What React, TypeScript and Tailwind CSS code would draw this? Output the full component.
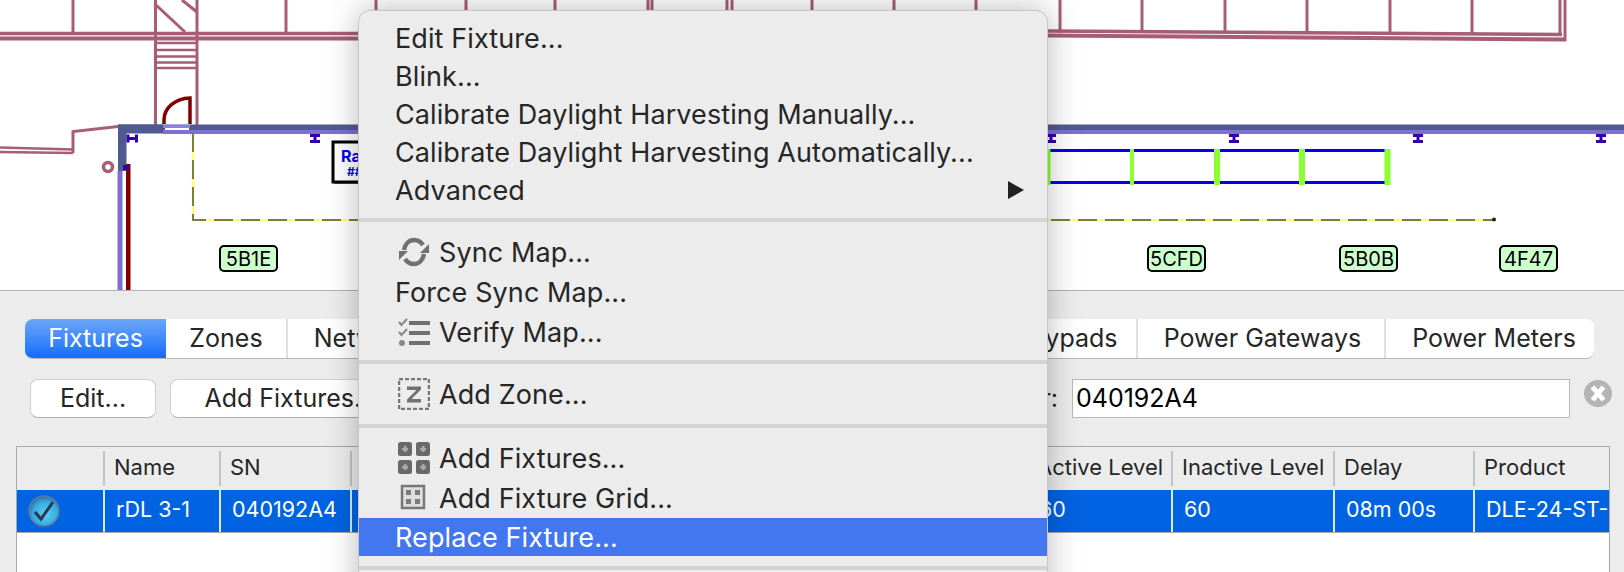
import React from "react";

const FONT = "font-['Inter','Liberation_Sans',sans-serif]";

function Plan() {
  const plum = "#a85c75";
  const tops = [73, 286, 376, 466, 555, 648, 652, 727, 732, 812, 894, 976, 1060, 1142, 1225, 1307, 1390, 1472];
  const markers = [315, 1051, 1234, 1418, 1601];
  const lamps: [number, number][] = [[1049, 3], [1132, 4], [1217, 6], [1302, 6], [1387.5, 6]];
  return (
    <svg width="1624" height="290" viewBox="0 0 1624 290" className="block">
      {tops.map((x) => (
        <line key={x} x1={x} y1={0} x2={x} y2={33} stroke={plum} strokeWidth="3" />
      ))}
      <path d="M0 33.500H358L1048 31L1562 34.500" stroke={plum} strokeWidth="3.500" fill="none" />
      <path d="M0 38.500H358L1048 35.500L1566 39.500" stroke={plum} strokeWidth="4" fill="none" />
      <path d="M1560 0V35M1565 0V41" stroke={plum} strokeWidth="3" fill="none" />
      <path d="M155.500 0V125M197 0V125" stroke={plum} strokeWidth="3" fill="none" />
      <path d="M156 5L185 32M182 0L197 12" stroke={plum} strokeWidth="3" fill="none" />
      <path d="M155 43H197M155 50H197M155 56.500H197M155 62.500H197M155 68H197" stroke={plum} strokeWidth="2.500" fill="none" />
      <path d="M0 147.500L73 149.500M0 152L73 153" stroke={plum} strokeWidth="2.500" fill="none" />
      <path d="M73 153V131.500L118 126.500" stroke={plum} strokeWidth="3" fill="none" />
      <circle cx="108" cy="167" r="4.500" stroke={plum} strokeWidth="3.500" fill="none" />
      <rect x="118" y="124.500" width="1506" height="6" fill="#505a90" />
      <rect x="163" y="130" width="1461" height="4" fill="#7e6fd0" />
      <rect x="118" y="124.500" width="45" height="9" fill="#505a90" />
      <rect x="165" y="128" width="24" height="2" fill="#fff" />
      <rect x="163" y="125" width="27" height="3" fill="#8f82de" />
      <rect x="118" y="130" width="8.500" height="41" fill="#505a90" />
      <rect x="117.500" y="171" width="5" height="119" fill="#7e6fd0" />
      <rect x="126" y="164" width="4.500" height="126" fill="#800000" />
      <rect x="123" y="165" width="6" height="5" fill="#3300b0" />
      <path d="M164 124V120C164 108 175 98.500 190 98V124" stroke="#800000" strokeWidth="3.500" fill="none" />
      <path d="M128 134.500V142.500M136.500 134.500V142.500M128 138.500H136.500" stroke="#3300b0" strokeWidth="3" fill="none" />
      {markers.map((x) => (
        <path key={x} d={`M${x - 5} 135.500H${x + 5}M${x} 135V142M${x - 5} 141.500H${x + 5}`} stroke="#3300b0" strokeWidth="3" fill="none" />
      ))}
      <path d="M193 133V220H1494" stroke="#ffff70" strokeWidth="2" fill="none" />
      <path d="M193 133V220H1494" stroke="#7d7d3e" strokeWidth="2" strokeDasharray="19 8" fill="none" />
      <circle cx="1494" cy="219.500" r="2" fill="#222" />
      <path d="M1040 150.500H1386M1040 182.500H1386" stroke="#0000ee" strokeWidth="3" fill="none" />
      {lamps.map(([x, w]) => (
        <rect key={x} x={x - w / 2} y={149} width={w} height={36} fill="#8cff30" />
      ))}
      <rect x="334" y="143" width="40" height="41" fill="#777" />
      <rect x="333" y="142" width="40" height="40" fill="#fff" stroke="#000" strokeWidth="3" />
    </svg>
  );
}

function MapLabel({ text, className }: { text: string; className: string }) {
  return (
    <div className={`absolute top-[245px] h-[27px] flex items-center justify-center rounded-[5px] border-2 border-black bg-[#ccffcc] text-[20px] leading-none text-black ${className}`}>
      {text}
    </div>
  );
}

function SyncIcon() {
  return (
    <svg width="32" height="30" viewBox="0 0 32 30" fill="none">
      <path d="M6 13C7 7 11 3 16 3C20 3 23 5 25 8" stroke="#707070" strokeWidth="4.500" />
      <path d="M26 17C25 23 21 27 16 27C12 27 9 25 7 22" stroke="#707070" strokeWidth="4.500" />
      <path d="M31 7V16H22Z" fill="#707070" />
      <path d="M1 23V14H10Z" fill="#707070" />
    </svg>
  );
}

function VerifyIcon() {
  return (
    <svg width="32" height="30" viewBox="0 0 32 30" fill="none">
      <path d="M1 5L3.500 8L9 2M1 15L3.500 18L9 12" stroke="#888" strokeWidth="2" />
      <circle cx="4" cy="26" r="3" fill="#888" />
      <path d="M11 6H32M11 16H32M11 26H32" stroke="#707070" strokeWidth="4" />
    </svg>
  );
}

function ZoneIcon() {
  return (
    <svg width="32" height="32" viewBox="0 0 32 32" fill="none">
      <rect x="1" y="1" width="30" height="30" stroke="#777" strokeWidth="2.500" strokeDasharray="4 2" />
      <path d="M9 8.500H23V11.500L13.500 21H23V24.500H9V21.500L18.500 12H9Z" fill="#707070" />
    </svg>
  );
}

function FixturesIcon() {
  const cells = [[0, 0], [18, 0], [0, 18], [18, 18]];
  return (
    <svg width="32" height="32" viewBox="0 0 32 32">
      {cells.map(([x, y]) => (
        <g key={`${x}${y}`}>
          <rect x={x} y={y} width="14" height="14" rx="2.500" fill="#696969" />
          <rect x={x + 4} y={y + 6} width="6" height="2.500" fill="#aaa" />
          <rect x={x + 6} y={y + 4} width="2.500" height="6" fill="#aaa" />
        </g>
      ))}
    </svg>
  );
}

function GridIcon() {
  const cells = [[8, 8], [17, 8], [8, 17], [17, 17]];
  return (
    <svg width="32" height="32" viewBox="0 0 32 32" fill="none">
      <rect x="4" y="4" width="22" height="22" fill="#ddd" stroke="#777" strokeWidth="2.500" />
      {cells.map(([x, y]) => (
        <rect key={`${x}${y}`} x={x} y={y} width="5" height="5" fill="#7a7a7a" />
      ))}
    </svg>
  );
}

function Row({ label, icon, className = "h-10" }: { label: string; icon?: React.ReactNode; className?: string }) {
  return (
    <div className={`flex items-center ${icon ? "pl-[39px] gap-[9px]" : "pl-[36px]"} ${className}`}>
      {icon && <span className="flex w-[32px] justify-center">{icon}</span>}
      <span>{label}</span>
    </div>
  );
}

function Separator({ className }: { className: string }) {
  return <div className={`h-1 bg-[#d3d3d3] ${className}`} />;
}

function ContextMenu() {
  return (
    <div className="absolute left-[358px] top-[10px] h-[600px] w-[690px] rounded-[12px] border border-[#c6c6c6] bg-[#ececec] pt-[8px] text-[27px] leading-none tracking-[0.1px] text-[#262626] shadow-[0_0_32px_rgba(0,0,0,0.28)]">
      <Row label="Edit Fixture..." className="h-[38px]" />
      <Row label="Blink..." className="h-[38px]" />
      <Row label="Calibrate Daylight Harvesting Manually..." className="h-[38px]" />
      <Row label="Calibrate Daylight Harvesting Automatically..." className="h-[38px]" />
      <div className="relative">
        <Row label="Advanced" className="h-[38px]" />
        <svg width="16" height="18" viewBox="0 0 16 18" className="absolute right-[23px] top-[10px]">
          <path d="M0 0L16 9L0 18Z" fill="#222" />
        </svg>
      </div>
      <Separator className="mb-[10px] mt-[9px]" />
      <Row label="Sync Map..." icon={<SyncIcon />} />
      <Row label="Force Sync Map..." />
      <Row label="Verify Map..." icon={<VerifyIcon />} />
      <Separator className="mb-[10px] mt-[8px]" />
      <Row label="Add Zone..." icon={<ZoneIcon />} />
      <Separator className="mb-[10px] mt-[10px]" />
      <Row label="Add Fixtures..." icon={<FixturesIcon />} />
      <Row label="Add Fixture Grid..." icon={<GridIcon />} />
      <div className="flex h-[38px] items-center bg-[#4377f0] pl-[36px] text-white">Replace Fixture...</div>
      <Separator className="mt-[10px]" />
    </div>
  );
}

function Tab({ label, className }: { label?: string; className: string }) {
  return (
    <div className={`flex h-full items-center justify-center border-r-2 border-[#e0e0e0] ${className}`}>{label}</div>
  );
}

function CheckBadge() {
  return (
    <svg width="32" height="32" viewBox="0 0 32 32">
      <defs>
        <radialGradient id="badge" cx="55%" cy="60%" r="60%">
          <stop offset="0%" stopColor="#5cd0f4" />
          <stop offset="70%" stopColor="#35a8e0" />
          <stop offset="100%" stopColor="#2a6fa8" />
        </radialGradient>
      </defs>
      <circle cx="16" cy="16" r="15" fill="url(#badge)" stroke="#5b7c9c" strokeWidth="1.500" />
      <path d="M7 17L13 24L25 7" stroke="#27384f" strokeWidth="3" fill="none" />
    </svg>
  );
}

const COLS = "grid grid-cols-[88px_116px_131px_676px_145px_162px_140px_1fr]";

function HeadCell({ text, divider = true }: { text?: string; divider?: boolean }) {
  return (
    <div className="relative flex items-center overflow-hidden whitespace-nowrap pb-[3px] pl-[9px]">
      {text}
      {divider && <span className="absolute right-0 top-[4px] h-[35px] w-[2px] bg-[#c2c2c2]" />}
    </div>
  );
}

function BodyCell({ text, divider = true }: { text?: string; divider?: boolean }) {
  return (
    <div className={`flex items-center overflow-hidden whitespace-nowrap pb-[2px] pl-[11px] ${divider ? "border-r-2 border-[#dfe8f5]" : ""}`}>{text}</div>
  );
}

function Panel() {
  return (
    <div className="h-[282px] border-t border-[#b4b4b4] bg-[#ececec] pt-[28px] text-[#262626]">
      <div className="ml-[25px] flex h-10 w-[1569px] overflow-hidden rounded-[8px] border-b border-[#b8b8b8] bg-white text-[25px] leading-none">
        <div className="flex h-full w-[141px] items-center justify-center bg-gradient-to-b from-[#6ba6f8] to-[#0a6cfb] text-white">Fixtures</div>
        <Tab label="Zones" className="w-[122px]" />
        <Tab label="Network" className="w-[154px]" />
        <Tab className="flex-1" />
        <Tab label="Keypads" className="w-[141px]" />
        <Tab label="Power Gateways" className="w-[248px] pl-[3px]" />
        <div className="flex h-full w-[208px] items-center justify-center pl-[8px]">Power Meters</div>
      </div>
      <div className="mt-[20px] flex h-[39px] items-center pl-[30px] text-[25px] leading-none">
        <button className="h-full w-[126px] rounded-[8px] border border-[#d0d0d0] border-b-[#b0b0b0] bg-white">Edit...</button>
        <button className="ml-[14px] h-full w-[240px] rounded-[8px] border border-[#d0d0d0] border-b-[#b0b0b0] bg-white">Add Fixtures...</button>
        <div className="ml-auto mr-[14px]">Filter:</div>
        <div className="flex h-full w-[498px] items-center border border-[#b8b8b8] bg-white pl-[3px] text-black">040192A4</div>
        <svg width="28" height="27" viewBox="0 0 28 27" className="ml-[14px] mr-[12px] -translate-y-[5px]">
          <ellipse cx="14" cy="13.500" rx="14" ry="13.500" fill="#b4b4b4" />
          <path d="M8.500 7L19.500 20M19.500 7L8.500 20" stroke="#fff" strokeWidth="5" />
        </svg>
      </div>
      <div className="ml-[16px] mt-[28px] h-[126px] w-[1594px] border-x border-t border-[#a8a8a8] bg-white text-[22px] leading-none">
        <div className={`${COLS} h-[43px] bg-[#ececec]`}>
          <HeadCell />
          <HeadCell text="Name" />
          <HeadCell text="SN" />
          <HeadCell />
          <HeadCell text="Active Level" />
          <HeadCell text="Inactive Level" />
          <HeadCell text="Delay" />
          <HeadCell text="Product" divider={false} />
        </div>
        <div className={`${COLS} h-[43px] border-b border-[#a8a8a8] bg-[#0063e1] text-[21.5px] text-white`}>
          <div className="flex items-center border-r-2 border-[#dfe8f5] pl-[11px]"><CheckBadge /></div>
          <BodyCell text="rDL 3-1" />
          <BodyCell text="040192A4" />
          <BodyCell />
          <BodyCell text="60" />
          <BodyCell text="60" />
          <BodyCell text="08m 00s" />
          <BodyCell text="DLE-24-ST-" divider={false} />
        </div>
      </div>
    </div>
  );
}

export default function App() {
  return (
    <div className={`relative h-[572px] w-[1624px] overflow-hidden bg-white ${FONT}`}>
      <div className="relative h-[290px]">
        <Plan />
        <div className="absolute left-[341px] top-[148px] text-[16px] font-bold leading-[16px] text-[#0000ee]">
          Ra<div className="pl-[6px] text-[12px]">##</div>
        </div>
        <MapLabel text="5B1E" className="left-[219px] w-[59px]" />
        <MapLabel text="5CFD" className="left-[1147px] w-[59px]" />
        <MapLabel text="5B0B" className="left-[1339px] w-[59px]" />
        <MapLabel text="4F47" className="left-[1499px] w-[59px]" />
      </div>
      <Panel />
      <ContextMenu />
    </div>
  );
}
